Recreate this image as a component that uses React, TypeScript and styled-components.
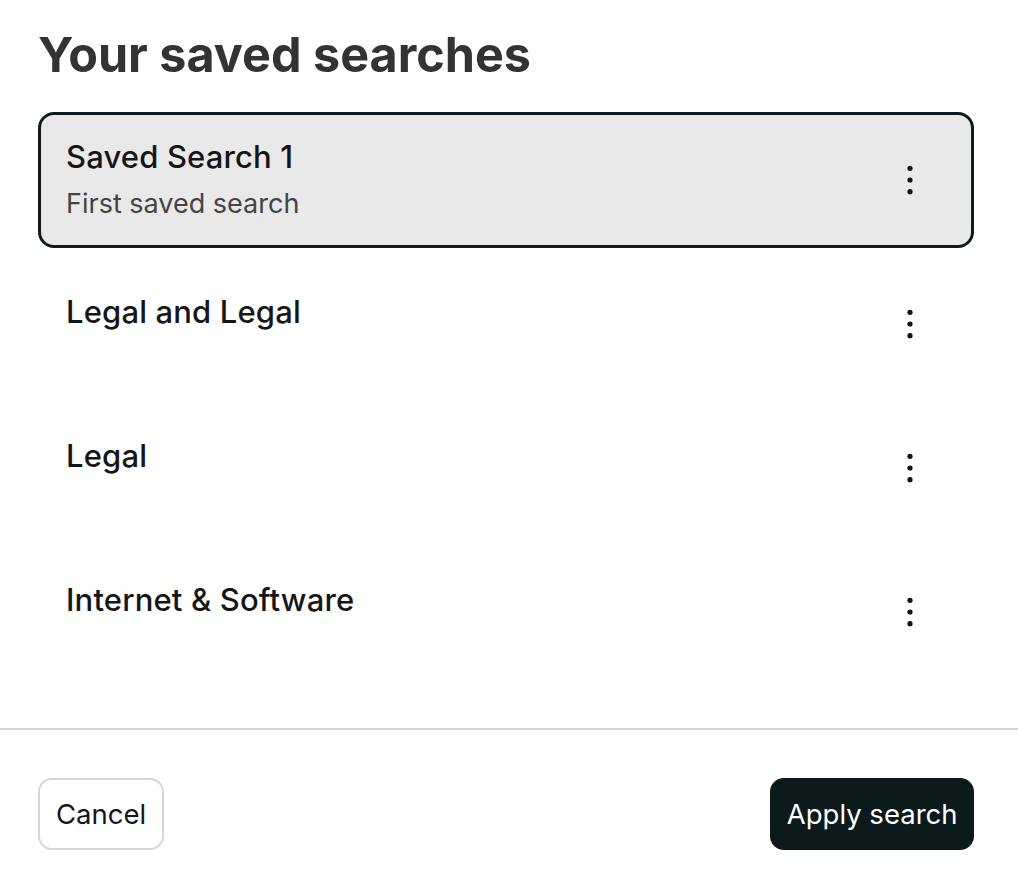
import React from "react";
import styled, { createGlobalStyle } from "styled-components";

const Global = createGlobalStyle`
  html, body { margin: 0; padding: 0; background: #ffffff; }
  body { font-family: Inter, "Noto Sans", Arial, sans-serif; -webkit-font-smoothing: antialiased; }
  * { box-sizing: border-box; }
`;

const Page = styled.div`
  width: 1018px;
  height: 874px;
  display: flex;
  flex-direction: column;
  background: #fff;
`;

const Body = styled.div`
  padding: 26px 44px 0 38px;
  flex: 1;
`;

const Heading = styled.h1`
  margin: 0 0 28px;
  font-size: 48.5px;
  line-height: 58px;
  font-weight: 700;
  letter-spacing: 0;
  color: #333333;
`;

const List = styled.div`
  display: flex;
  flex-direction: column;
  gap: 8px;
`;

const Row = styled.div<{ $selected?: boolean }>`
  height: 136px;
  display: flex;
  align-items: center;
  justify-content: space-between;
  padding: 0 37px 0 25px;
  border: 3px solid ${(p) => (p.$selected ? "#0d1b1e" : "transparent")};
  border-radius: 16px;
  background: ${(p) => (p.$selected ? "#e9e9e9" : "transparent")};
`;

const TextCol = styled.div<{ $hasSub?: boolean }>`
  display: flex;
  flex-direction: column;
  gap: 14px;
  padding-bottom: ${(p) => (p.$hasSub ? "0" : "24px")};
`;

const RowTitle = styled.div`
  font-size: 31px;
  line-height: 34px;
  font-weight: 500;
  letter-spacing: 0.15px;
  color: #161616;
`;

const RowSub = styled.div`
  font-size: 27px;
  line-height: 32px;
  font-weight: 400;
  color: #444444;
`;

const MenuButton = styled.button`
  width: 48px;
  height: 48px;
  border: none;
  background: transparent;
  padding: 0;
  display: flex;
  align-items: center;
  justify-content: center;
  cursor: pointer;
`;

const Divider = styled.hr`
  margin: 0;
  border: none;
  height: 2px;
  background: #d3d3e0;
`;

const Footer = styled.div`
  display: flex;
  justify-content: space-between;
  align-items: center;
  padding: 48px 44px 24px 38px;
`;

const Button = styled.button<{ $primary?: boolean }>`
  height: 72px;
  padding: 0 ${(p) => (p.$primary ? "14.5px" : "16px")};
  border-radius: 14px;
  font-family: inherit;
  font-size: 27.5px;
  font-weight: 400;
  cursor: pointer;
  border: 2px solid ${(p) => (p.$primary ? "#0c1a1c" : "#d6d6d6")};
  background: ${(p) => (p.$primary ? "#0c1a1c" : "#ffffff")};
  color: ${(p) => (p.$primary ? "#ffffff" : "#161616")};
`;

const Dots = () => (
  <svg width="8" height="32" viewBox="0 0 8 32">
    <circle cx="4" cy="4.3" r="2.6" fill="#111" />
    <circle cx="4" cy="16" r="2.6" fill="#111" />
    <circle cx="4" cy="27.7" r="2.6" fill="#111" />
  </svg>
);

const items = [
  { title: "Saved Search 1", sub: "First saved search", selected: true },
  { title: "Legal and Legal" },
  { title: "Legal" },
  { title: "Internet & Software" },
];

export default function App() {
  return (
    <>
      <Global />
      <Page>
        <Body>
          <Heading>Your saved searches</Heading>
          <List>
            {items.map((it) => (
              <Row key={it.title} $selected={it.selected}>
                <TextCol $hasSub={!!it.sub}>
                  <RowTitle>{it.title}</RowTitle>
                  {it.sub && <RowSub>{it.sub}</RowSub>}
                </TextCol>
                <MenuButton aria-label="More options">
                  <Dots />
                </MenuButton>
              </Row>
            ))}
          </List>
        </Body>
        <Divider />
        <Footer>
          <Button>Cancel</Button>
          <Button $primary>Apply search</Button>
        </Footer>
      </Page>
    </>
  );
}
